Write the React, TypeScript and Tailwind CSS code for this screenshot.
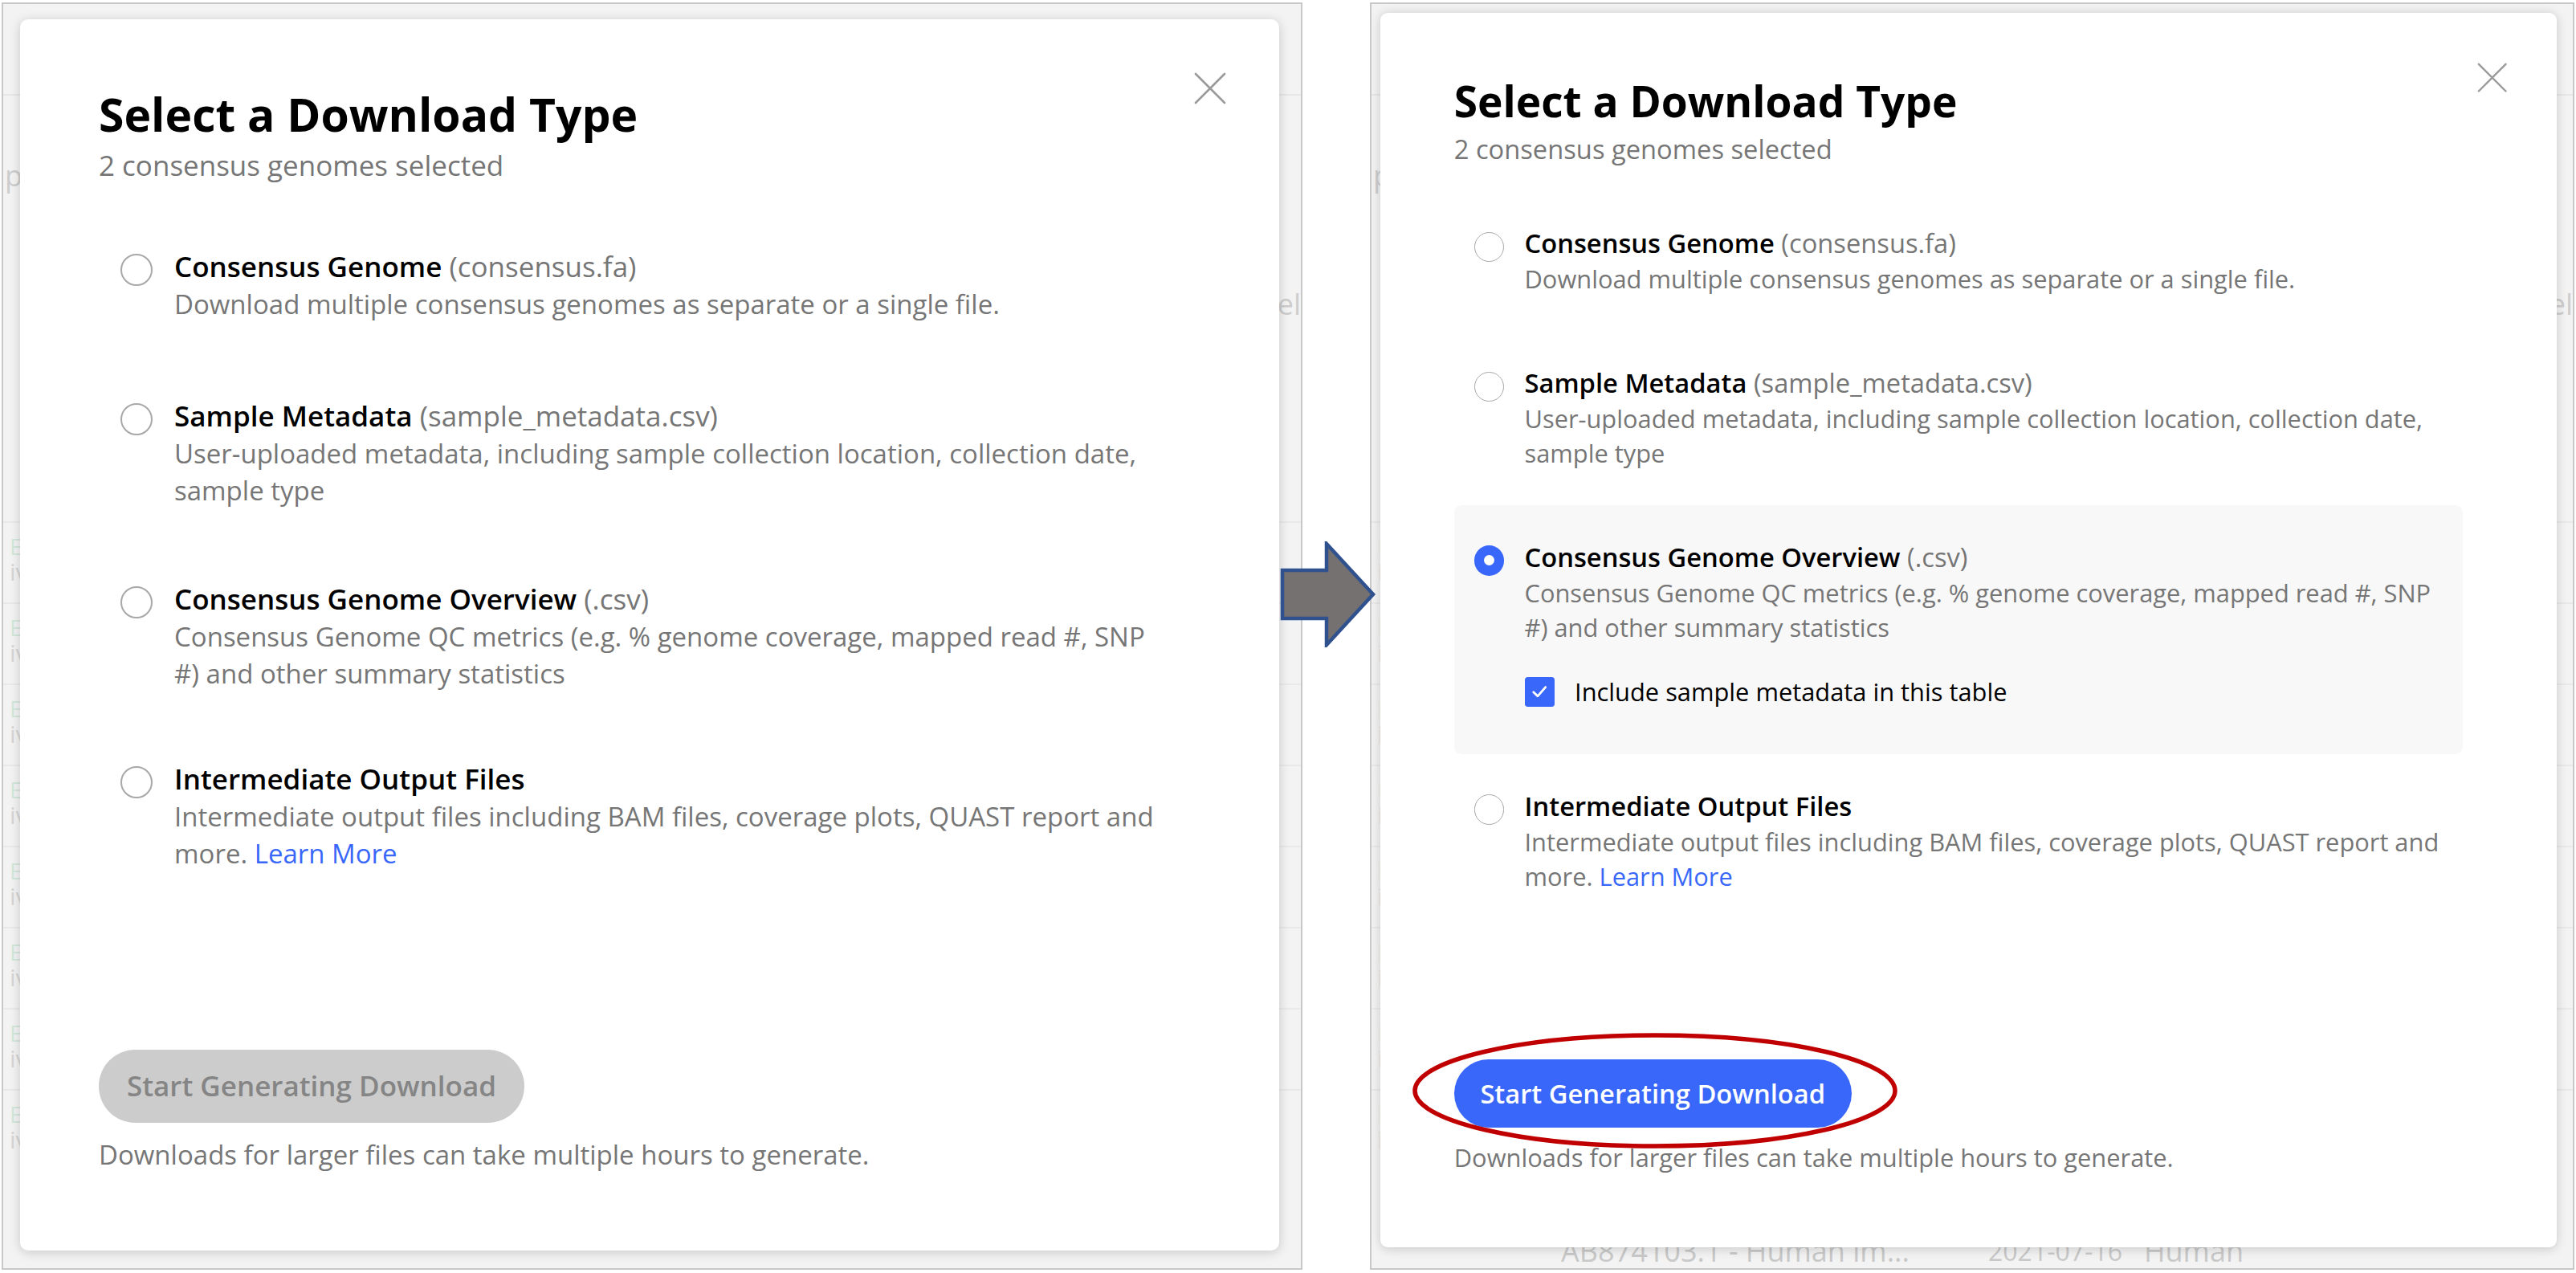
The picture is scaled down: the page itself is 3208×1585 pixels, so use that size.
import React from "react";

type Option = {
  id: string;
  title: string;
  ext: string;
  description: string;
  link?: boolean;
};

const OPTIONS: Option[] = [
  {
    id: "consensus",
    title: "Consensus Genome",
    ext: "(consensus.fa)",
    description: "Download multiple consensus genomes as separate or a single file.",
  },
  {
    id: "metadata",
    title: "Sample Metadata",
    ext: "(sample_metadata.csv)",
    description:
      "User-uploaded metadata, including sample collection location, collection date, sample type",
  },
  {
    id: "overview",
    title: "Consensus Genome Overview",
    ext: "(.csv)",
    description:
      "Consensus Genome QC metrics (e.g. % genome coverage, mapped read #, SNP #) and other summary statistics",
  },
  {
    id: "intermediate",
    title: "Intermediate Output Files",
    ext: "",
    description: "Intermediate output files including BAM files, coverage plots, QUAST report and more.",
    link: true,
  },
];

// the first screenshot sits a little tighter between rows 2-4
const COMPACT_PADDING: Record<string, string> = {
  consensus: "pt-[46px] pb-[46px]",
  metadata: "pt-[46px] pb-[42px]",
  overview: "pt-[46px] pb-[38px]",
  intermediate: "pt-[46px] pb-[46px]",
};

function CloseIcon() {
  return (
    <svg width="40" height="40" viewBox="0 0 40 40" fill="none">
      <path d="M2 2L38 38M38 2L2 38" stroke="#9a9a9a" strokeWidth="2.6" strokeLinecap="round" />
    </svg>
  );
}

function Radio({ checked }: { checked: boolean }) {
  if (checked) {
    return (
      <div className="mt-[8px] flex h-[40px] w-[40px] shrink-0 items-center justify-center rounded-full bg-[#3867fa]">
        <div className="h-[14px] w-[14px] rounded-full bg-white" />
      </div>
    );
  }
  return <div className="mt-[8px] h-[40px] w-[40px] shrink-0 rounded-full border-2 border-[#a8a8a8] bg-white" />;
}

function Checkbox() {
  return (
    <div className="flex h-[40px] w-[40px] shrink-0 items-center justify-center rounded-[4px] bg-[#3867fa]">
      <svg width="24" height="24" viewBox="0 0 24 24" fill="none">
        <path d="M4 12.5L9.5 18L20 6" stroke="white" strokeWidth="3" strokeLinecap="round" strokeLinejoin="round" />
      </svg>
    </div>
  );
}

function DownloadModal({ selected, compact }: { selected: string | null; compact?: boolean }) {
  return (
    <div className="relative w-[1568px] rounded-[10px] bg-white pb-[96px] pl-[98px] pr-[125px] pt-[88px] font-['Open_Sans','Liberation_Sans',sans-serif] shadow-[0_2px_14px_rgba(0,0,0,0.18)]">
      <button className="absolute right-[66px] top-[66px] h-[40px] w-[40px]">
        <CloseIcon />
      </button>

      <h1 className="text-[57px] font-bold leading-[60px] text-black">Select a Download Type</h1>
      <p className="mt-[11px] text-[35px] leading-[46px] text-[#767676]">2 consensus genomes selected</p>

      <div className="mt-[33px] flex flex-col">
        {OPTIONS.map((option) => {
          const isSelected = option.id === selected;
          const padding = compact ? COMPACT_PADDING[option.id] : "pt-[46px] pb-[46px]";
          return (
            <div
              key={option.id}
              className={
                isSelected
                  ? `flex gap-[27px] rounded-[10px] bg-[#f8f8f8] pl-[27px] pr-[20px] ${padding}`
                  : `flex gap-[27px] rounded-[10px] pl-[27px] pr-[20px] ${padding}`
              }
            >
              <Radio checked={isSelected} />
              <div className="flex flex-col">
                <div className="text-[35px] leading-[48px]">
                  <span className="font-semibold text-black">{option.title}</span>
                  {option.ext ? <span className="text-[#767676]"> {option.ext}</span> : null}
                </div>
                <p className="text-[33px] leading-[46px] text-[#767676]">
                  {option.description}
                  {option.link ? <span className="text-[#3867fa]"> Learn More</span> : null}
                </p>
                {isSelected && option.id === "overview" ? (
                  <div className="mb-[14px] mt-[40px] flex items-center gap-[27px]">
                    <Checkbox />
                    <span className="text-[33px] leading-[46px] text-black">Include sample metadata in this table</span>
                  </div>
                ) : null}
              </div>
            </div>
          );
        })}
      </div>

      <button
        className={
          selected
            ? "mt-[175px] flex h-[91px] w-[530px] items-center justify-center rounded-full bg-[#3867fa] text-[35px] font-semibold text-white"
            : "mt-[175px] flex h-[91px] w-[530px] items-center justify-center rounded-full bg-[#cccccc] text-[35px] font-semibold text-[#858585]"
        }
      >
        Start Generating Download
      </button>
      <p className="mt-[17px] text-[33px] leading-[46px] text-[#767676]">
        Downloads for larger files can take multiple hours to generate.
      </p>
    </div>
  );
}

function BackgroundPage({ side }: { side: "left" | "right" }) {
  return (
    <div className="flex h-full flex-col font-['Open_Sans','Liberation_Sans',sans-serif]">
      <div className="h-[112px]" />
      <div className="h-[2px] bg-[#e6e6e6]" />
      <div className="flex pl-[2px] pt-[80px] text-[36px] leading-[40px] text-[#cdcdcd]">
        <span>p</span>
      </div>
      <div className="flex justify-end pt-[120px] text-[36px] leading-[40px] text-[#cdcdcd]">
        <span>el</span>
      </div>
      <div className="h-[250px]" />
      {[0, 1, 2, 3, 4, 5, 6, 7].map((row) => (
        <div key={row} className="flex h-[101px] flex-col border-t-2 border-[#e9e9e9] pl-[8px] pt-[14px]">
          <span className="text-[28px] leading-[30px] text-[#d3e8dc]">E</span>
          <span className="text-[30px] leading-[34px] text-[#d6d6d6]">iv</span>
        </div>
      ))}
      {side === "right" ? (
        <div className="mt-auto flex whitespace-nowrap pb-[1px] pl-[236px] text-[36px] leading-[40px] text-[#c9c9c9]">
          <span className="w-[532px] shrink-0">AB874103.1 - Human im...</span>
          <span className="w-[194px] shrink-0 text-[32px]">2021-07-16</span>
          <span>Human</span>
        </div>
      ) : null}
    </div>
  );
}

export default function App() {
  return (
    <div className="relative h-[1585px] w-[3208px] overflow-hidden bg-white">
      <div className="flex pt-[3px]">
        <div className="relative ml-[2px] h-[1578px] w-[1620px] overflow-hidden border-2 border-[#c8c8c8] bg-[#f3f3f3]">
          <BackgroundPage side="left" />
          <div className="absolute left-[21px] top-[19px]">
            <DownloadModal selected={null} compact />
          </div>
        </div>

        <div className="relative ml-[84px] h-[1578px] w-[1500px] overflow-hidden border-2 border-[#c8c8c8] bg-[#f3f3f3]">
          <BackgroundPage side="right" />
          <div className="absolute left-[12px] top-[12px] [zoom:0.934]">
            <DownloadModal selected="overview" />
          </div>
        </div>
      </div>

      {/* arrow between the two states */}
      <svg className="absolute left-[1594px] top-[674px]" width="120" height="132" viewBox="0 0 120 132" fill="none">
        <path
          d="M3 36H58V3L116 66L58 129V96H3Z"
          fill="#767171"
          stroke="#2f528f"
          strokeWidth="4.5"
          strokeLinejoin="miter"
        />
      </svg>

      {/* highlight on the enabled button */}
      <svg className="absolute left-[1757px] top-[1285px]" width="608" height="146" viewBox="0 0 608 146" fill="none">
        <ellipse cx="304" cy="73" rx="299" ry="69" stroke="#c00000" strokeWidth="5.5" />
      </svg>
    </div>
  );
}
